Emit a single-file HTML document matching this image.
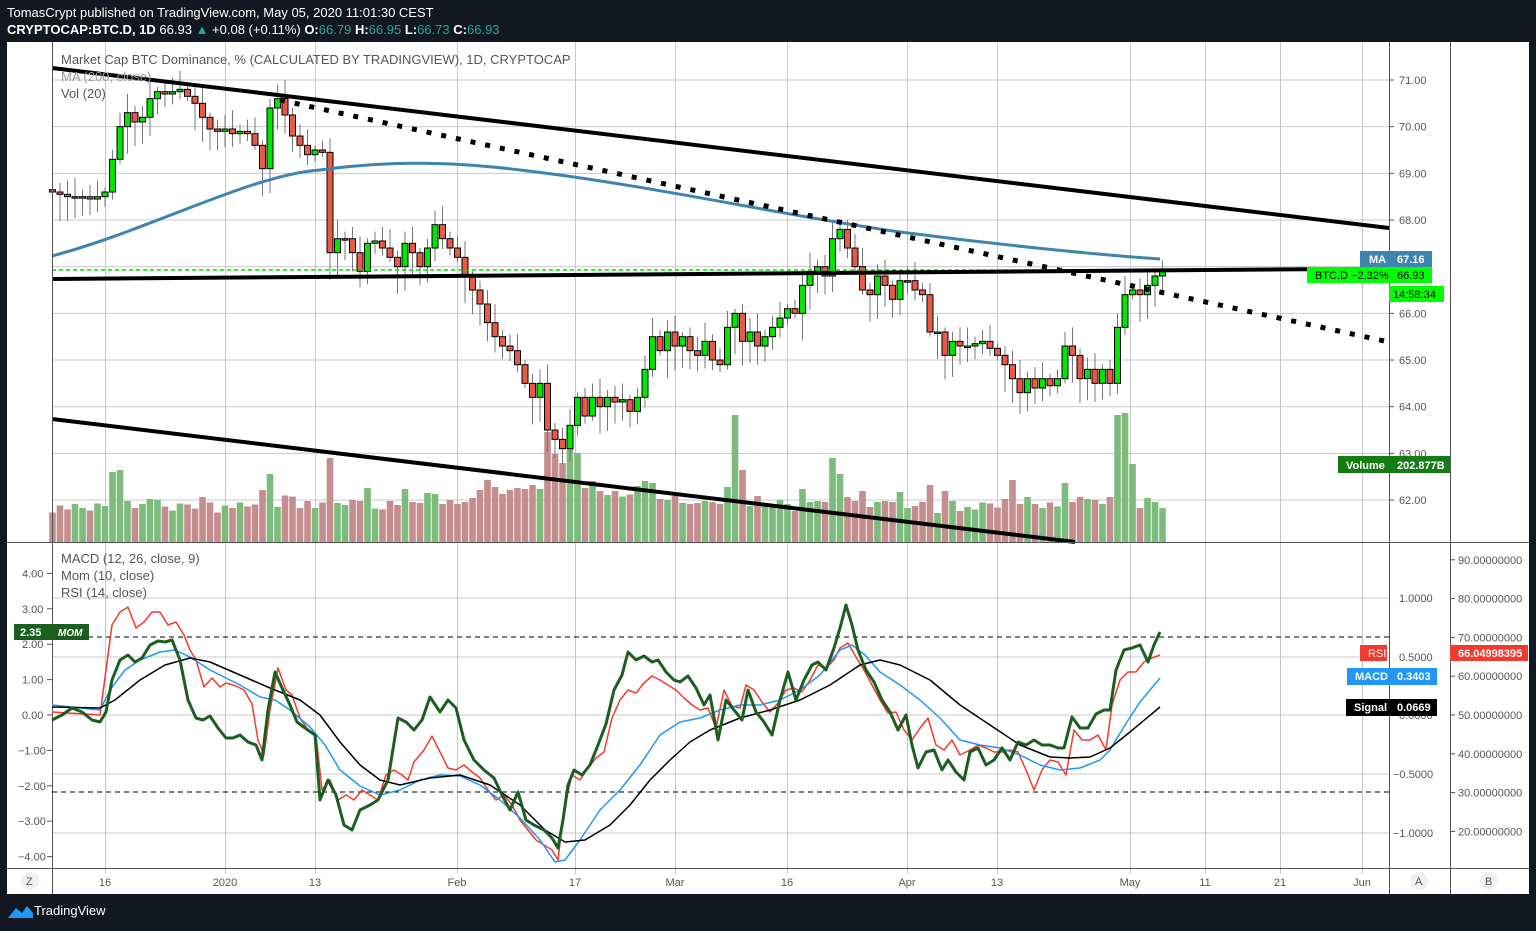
<!DOCTYPE html>
<html><head><meta charset="utf-8"><style>
html,body{margin:0;padding:0;background:#131722;width:1536px;height:931px;overflow:hidden;font-family:"Liberation Sans",sans-serif}
#hdr{position:absolute;left:7px;top:4px;color:#fff;font-size:13px;line-height:17px}
#ft{position:absolute;left:8px;top:903px;color:#fff;font-size:13px}
svg text{font-family:"Liberation Sans",sans-serif}
</style></head><body>
<div id="hdr">TomasCrypt published on TradingView.com, May 05, 2020 11:01:30 CEST<br><b>CRYPTOCAP:BTC.D, 1D</b> 66.93 <span style="color:#26a69a">▲</span> +0.08 (+0.11%) <b>O:</b><span style="color:#26a69a">66.79</span> <b>H:</b><span style="color:#26a69a">66.95</span> <b>L:</b><span style="color:#26a69a">66.73</span> <b>C:</b><span style="color:#26a69a">66.93</span></div>
<svg id="s" width="1536" height="931" style="position:absolute;left:0;top:0">
<rect x="7" y="42" width="1522" height="852" fill="#fff"/>
<g id="grid" stroke="#c8c8c8" stroke-width="1"></g>
<g id="vol"></g>
<g id="cdl"></g>
<path d="M52 256 C150 230 250 175 320 170 C380 162 440 160 520 170 C650 185 780 215 900 232 C1000 245 1100 255 1160 259" fill="none" stroke="#3d84b0" stroke-width="3"/>
<line x1="52" y1="270" x2="1389" y2="270" stroke="#00dd00" stroke-width="1.5" stroke-dasharray="4 3"/>
<line x1="52" y1="68" x2="1389" y2="228" stroke="#000" stroke-width="4"/>
<line x1="52" y1="279" x2="1340" y2="269" stroke="#000" stroke-width="4"/>
<line x1="52" y1="419" x2="1075" y2="542" stroke="#000" stroke-width="4"/>
<line x1="280" y1="100" x2="1389" y2="342" stroke="#000" stroke-width="5" stroke-dasharray="5 10"/>
<line x1="7" y1="542.5" x2="1529" y2="542.5" stroke="#555"/>
<line x1="7" y1="868.5" x2="1529" y2="868.5" stroke="#555"/>
<line x1="52.5" y1="42" x2="52.5" y2="894" stroke="#555"/>
<line x1="1389.5" y1="42" x2="1389.5" y2="894" stroke="#555"/>
<line x1="1450.5" y1="42" x2="1450.5" y2="894" stroke="#555"/>
<g id="axt" font-size="11" fill="#555"></g>
<g font-size="13" fill="#555">
<text x="61" y="64">Market Cap BTC Dominance, % (CALCULATED BY TRADINGVIEW), 1D, CRYPTOCAP</text>
<text x="61" y="81" fill="#999">MA (200, close)</text>
<text x="61" y="98">Vol (20)</text>
<text x="61" y="563">MACD (12, 26, close, 9)</text>
<text x="61" y="580">Mom (10, close)</text>
<text x="61" y="597">RSI (14, close)</text>
</g>
<line x1="52" y1="637" x2="1389" y2="637" stroke="#000" stroke-dasharray="5 4"/>
<line x1="52" y1="792" x2="1389" y2="792" stroke="#000" stroke-dasharray="5 4"/>
<g id="osc" fill="none" stroke-linejoin="round"></g>
<rect x="1360" y="251" width="72" height="16" fill="#3d85b0"/><text x="1369" y="263" font-size="11" fill="#fff" font-weight="bold">MA</text><text x="1397" y="263" font-size="11" fill="#fff" font-weight="bold">67.16</text>
<rect x="1307" y="267" width="125" height="16" fill="#00ff00"/><text x="1315" y="279" font-size="11" fill="#000">BTC.D −2.32%</text><text x="1397" y="279" font-size="11" fill="#000">66.93</text>
<rect x="1389" y="286" width="55" height="16" fill="#00ff00"/><text x="1393" y="298" font-size="11" fill="#000">14:58:34</text>
<rect x="1338" y="456" width="112" height="17" fill="#137d13"/><text x="1346" y="469" font-size="11" fill="#fff" font-weight="bold">Volume</text><text x="1397" y="469" font-size="11" fill="#fff" font-weight="bold">202.877B</text>
<rect x="14" y="624" width="75" height="16" fill="#1b5e20"/><text x="20" y="636" font-size="11" fill="#fff" font-weight="bold">2.35</text><text x="58" y="636" font-size="10" fill="#fff" font-weight="bold" font-style="italic">MOM</text>
<rect x="1360" y="645" width="27" height="16" fill="#f23a2e"/><text x="1368" y="657" font-size="11" fill="#fff">RSI</text>
<rect x="1450" y="645" width="78" height="16" fill="#f23a2e"/><text x="1458" y="657" font-size="11" fill="#fff" font-weight="bold">66.04998395</text>
<rect x="1347" y="668" width="90" height="17" fill="#2196f3"/><text x="1355" y="680" font-size="11" fill="#fff" font-weight="bold">MACD</text><text x="1397" y="680" font-size="11" fill="#fff" font-weight="bold">0.3403</text>
<rect x="1346" y="699" width="91" height="17" fill="#000"/><text x="1354" y="711" font-size="11" fill="#fff" font-weight="bold">Signal</text><text x="1397" y="711" font-size="11" fill="#fff" font-weight="bold">0.0669</text>
<circle cx="30" cy="881" r="9" fill="#eef0f3"/><text x="26" y="885" font-size="11" fill="#555">Z</text>
<circle cx="1419" cy="881" r="9" fill="#eef0f3"/><text x="1415" y="885" font-size="11" fill="#555">A</text>
<circle cx="1489" cy="881" r="9" fill="#eef0f3"/><text x="1485" y="885" font-size="11" fill="#555">B</text>
<path d="M8 918 L16 908 L22 913 L27 906 L33 913 L33 918 Z" fill="#2196f3"/>
</svg>
<div id="ft" style="left:34px">TradingView</div>
<script>
var NS="http://www.w3.org/2000/svg";
function el(p,t,a,txt){var e=document.createElementNS(NS,t);for(var k in a)e.setAttribute(k,a[k]);if(txt!=null)e.textContent=txt;document.getElementById(p).appendChild(e);return e;}
var C=[68.6,68.55,68.5,68.5,68.5,68.45,68.5,68.6,69.3,70.0,70.3,70.1,70.2,70.6,70.75,70.7,70.75,70.8,70.65,70.5,70.2,69.95,69.9,69.95,69.85,69.9,69.85,69.6,69.1,70.4,70.6,70.25,69.8,69.6,69.4,69.5,69.45,67.3,67.6,67.6,67.3,66.9,67.5,67.55,67.4,67.2,67.0,67.5,67.3,67.0,67.4,67.9,67.6,67.4,67.2,66.8,66.5,66.2,65.8,65.5,65.3,65.2,64.9,64.5,64.2,64.5,63.5,63.3,63.1,63.6,64.2,63.8,64.2,64.0,64.2,64.1,64.15,63.9,64.2,64.8,65.5,65.2,65.6,65.3,65.5,65.2,65.1,65.4,65.0,64.9,65.7,66.0,65.4,65.6,65.3,65.5,65.7,65.9,66.1,66.0,66.6,66.9,67.0,66.8,67.6,67.8,67.4,67.0,66.5,66.4,66.8,66.6,66.3,66.7,66.7,66.5,66.4,65.6,65.6,65.1,65.4,65.3,65.3,65.35,65.4,65.25,65.1,64.9,64.6,64.3,64.6,64.4,64.6,64.45,64.6,65.3,65.1,64.6,64.8,64.5,64.8,64.5,65.7,66.4,66.5,66.4,66.6,66.8,66.93];
function Y(p){return 80+(71-p)*46.67;}
var vx=[105,225,315,457,575,675,787,907,997,1130,1205,1280,1362];
vx.forEach(function(x){el('grid','line',{x1:x+.5,y1:42,x2:x+.5,y2:874});});
for(var p=62;p<=71;p++){var y=Y(p);el('grid','line',{x1:52,y1:y,x2:1389,y2:y});el('axt','text',{x:1399,y:y+4},p.toFixed(2));el('axt','line',{x1:1389,y1:y,x2:1394,y2:y,stroke:'#555'});}
[598,657,715,774,833].forEach(function(y){el('grid','line',{x1:52,y1:y,x2:1389,y2:y});});
var mac=[["1.0000",598],["0.5000",657],["0.0000",715],["−0.5000",774],["−1.0000",833]];
mac.forEach(function(m){el('axt','text',{x:m[0][0]=='−'?1393:1399,y:m[1]+4},m[0]);});
for(var v=4;v>=-4;v--){var y=715-v*35.4;el('axt','text',{x:v<0?18:22,y:y+4},(v<0?'−':'')+Math.abs(v).toFixed(2));el('axt','line',{x1:47,y1:y,x2:52,y2:y,stroke:'#555'});}
for(var r=90;r>=20;r-=10){var y=715-(r-50)*3.88;el('axt','text',{x:1458,y:y+4},r.toFixed(8));el('axt','line',{x1:1450,y1:y,x2:1455,y2:y,stroke:'#555'});}
var tl=[[105,"16"],[225,"2020"],[315,"13"],[457,"Feb"],[575,"17"],[675,"Mar"],[787,"16"],[907,"Apr"],[997,"13"],[1130,"May"],[1205,"11"],[1280,"21"],[1362,"Jun"]];
tl.forEach(function(t){el('axt','text',{x:t[0],y:886,'text-anchor':'middle'},t[1]);});
var spikes={8:20,9:15,37:15,66:40,67:35,68:30,69:28,70:25,91:80,92:20,104:30,105:25,128:20,142:60,143:80,144:40};
for(var i=0;i<C.length;i++){
 var x=52.5+7.5*i,c=C[i],o=i?C[i-1]:68.65,up=c>=o;
 var d=Math.abs(c-o);var h=Math.max(c,o)+0.1+((i*37)%7)*0.05,l=Math.min(c,o)-0.1-((i*53)%9)*0.06;
 var vh=28+Math.min(d*30,35)+((i*29)%11)+(spikes[i]||0);
 if(i>56&&i<80)vh+=12;
 el('vol','rect',{x:x-3.3,y:542-vh,width:6.6,height:vh,fill:up?'#7dbb7d':'#c48e8e'});
 el('cdl','line',{x1:x,y1:Y(h),x2:x,y2:Y(l),stroke:'#777'});
 var y1=Y(Math.max(c,o)),bh=Math.max(Y(Math.min(c,o))-y1,1.5);
 el('cdl','rect',{x:x-3,y:y1,width:6,height:bh,fill:up?'#00e600':'#e85a45',stroke:'#000','stroke-width':1});
}
function pl(pts,col,w){el('osc','polyline',{points:pts,stroke:col,'stroke-width':w});}
pl("52,712 100,715 106,670 112,625 120,612 128,607 136,628 144,622 152,612 160,612 168,625 176,622 184,635 190,650 196,660 204,687 212,678 220,687 226,683 236,686 244,690 252,704 258,740 264,755 270,710 278,668 286,690 292,695 300,718 308,730 316,735 322,790 330,780 338,800 346,795 354,800 362,790 370,795 378,800 386,775 394,770 402,775 408,780 414,762 424,750 432,736 440,752 448,768 456,770 464,765 472,772 480,778 488,790 496,800 504,795 512,805 520,820 528,830 536,840 544,845 552,850 558,860 564,810 572,775 580,780 588,768 596,758 604,752 612,718 620,700 628,690 636,693 644,683 652,676 660,680 668,685 676,690 684,698 692,705 700,710 708,708 716,728 724,690 732,706 740,708 746,685 754,690 762,702 770,712 778,703 786,690 794,688 802,692 810,680 818,665 826,668 834,660 840,648 848,643 856,657 864,670 872,685 880,700 888,713 896,712 904,730 912,740 920,728 928,718 936,745 944,750 952,740 960,755 970,750 978,745 986,748 994,752 1002,752 1010,750 1018,752 1026,770 1034,790 1042,770 1050,760 1058,762 1066,775 1074,730 1082,740 1090,740 1098,735 1106,750 1112,705 1120,680 1128,672 1136,672 1144,662 1152,658 1160,655","#f23a2e",1.5);
pl("52,705 100,710 110,690 125,670 140,660 160,652 175,650 190,657 210,670 240,685 260,697 275,700 290,710 310,727 325,745 340,770 360,786 380,795 400,790 420,780 440,775 460,776 480,785 500,800 520,818 540,840 555,862 565,860 580,840 600,810 620,790 640,765 660,735 680,722 700,718 720,710 740,705 760,705 780,700 800,690 820,675 840,650 852,645 865,655 880,672 900,685 920,700 940,718 960,740 980,745 1000,748 1020,755 1040,765 1060,770 1080,768 1100,760 1110,750 1125,725 1140,702 1160,678","#2196f3",1.5);
pl("52,707 100,708 115,700 140,680 165,665 190,658 210,662 240,675 270,688 300,700 320,715 340,742 360,765 380,780 400,785 430,778 460,775 490,785 520,805 545,830 565,842 585,840 610,825 630,805 650,780 670,760 690,742 710,730 740,718 770,710 800,700 830,685 860,665 880,660 900,665 930,680 960,705 990,725 1020,745 1050,757 1070,758 1090,757 1110,748 1130,732 1160,707","#000",1.5);
pl("52,720 62,715 72,708 82,712 92,720 100,722 106,712 112,680 120,660 128,655 135,662 142,658 150,645 158,641 165,642 172,640 180,660 188,700 196,718 203,720 210,716 218,728 226,738 233,738 240,735 248,742 256,745 262,760 268,710 275,672 283,690 290,705 297,722 305,728 315,735 320,800 328,780 336,795 344,825 352,830 360,810 370,805 378,800 388,780 398,718 406,722 414,730 422,720 430,697 440,712 448,700 456,708 464,740 474,760 484,770 494,778 502,795 510,810 518,792 526,820 534,825 544,830 552,838 558,848 563,820 568,785 574,770 582,775 590,765 598,745 606,724 614,690 622,675 628,652 636,660 644,656 652,662 658,660 666,672 674,680 680,682 688,676 696,688 704,705 710,695 718,740 726,700 734,710 742,720 748,690 756,712 764,722 772,735 780,700 788,672 796,700 804,680 812,665 818,662 826,670 834,648 840,628 846,605 852,625 858,650 866,670 874,682 882,700 890,712 898,730 906,715 912,745 918,768 926,752 934,750 942,770 948,760 956,772 964,780 970,752 978,748 986,765 994,760 1002,748 1010,760 1018,742 1026,745 1034,740 1042,745 1050,745 1058,748 1064,748 1072,717 1080,728 1088,728 1096,714 1104,710 1110,710 1116,670 1124,650 1132,648 1140,645 1148,662 1154,645 1160,632","#1b5e20",3);
</script>
</body></html>
